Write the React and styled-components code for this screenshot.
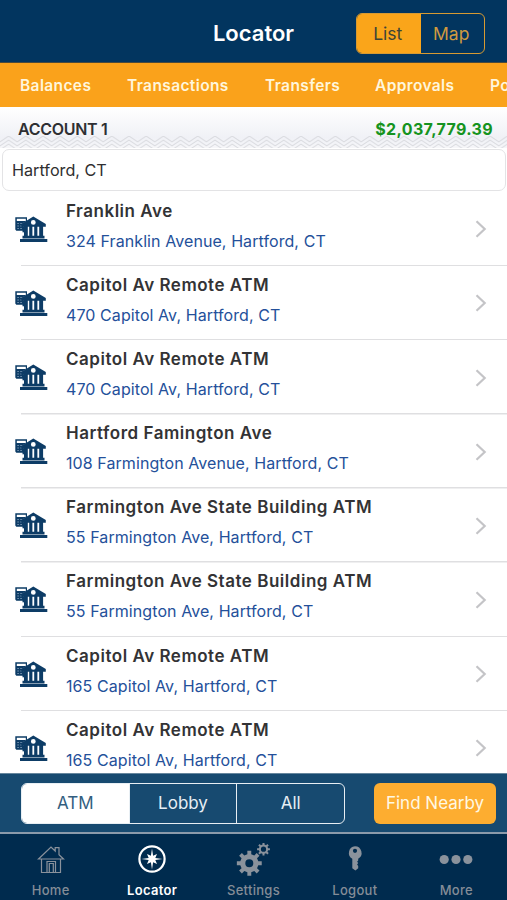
import React from 'react'
import styled, { createGlobalStyle } from 'styled-components'

const branches = [
  { name: 'Franklin Ave', address: '324 Franklin Avenue, Hartford, CT' },
  { name: 'Capitol Av Remote ATM', address: '470 Capitol Av, Hartford, CT' },
  { name: 'Capitol Av Remote ATM', address: '470 Capitol Av, Hartford, CT' },
  { name: 'Hartford Famington Ave', address: '108 Farmington Avenue, Hartford, CT' },
  { name: 'Farmington Ave State Building ATM', address: '55 Farmington Ave, Hartford, CT' },
  { name: 'Farmington Ave State Building ATM', address: '55 Farmington Ave, Hartford, CT' },
  { name: 'Capitol Av Remote ATM', address: '165 Capitol Av, Hartford, CT' },
  { name: 'Capitol Av Remote ATM', address: '165 Capitol Av, Hartford, CT' }
]

// outline of a gear: teeth between the root and the tip radius
const gearPath = (cx, cy, root, tip, teeth) => {
  const step = (Math.PI * 2) / teeth
  const points = []
  for (let i = 0; i < teeth; i++) {
    const a = i * step - Math.PI / 2
    const corners = [[-0.27, root], [-0.2, tip], [0.2, tip], [0.27, root]]
    corners.forEach(([k, r]) => {
      points.push(`${(cx + r * Math.cos(a + k * step)).toFixed(2)} ${(cy + r * Math.sin(a + k * step)).toFixed(2)}`)
    })
  }
  return `M${points.join('L')}Z`
}

const ring = (cx, cy, r) => `M${cx - r} ${cy}a${r} ${r} 0 1 0 ${r * 2} 0a${r} ${r} 0 1 0 ${-r * 2} 0Z`

const BankIcon = () => (
  <svg width='33' height='27' viewBox='0 0 33 27' fill='#0d3c66'>
    <path fillRule='evenodd' d='M.3 1.3H12v3.400L7.500 7.500V10l2.300.5v4.200H1.300L.3 13.500Z M1.800 2.800v2.200h9V2.800Z' />
    <path d='M2.200 7.500h1.800M5.200 7.500h1.800M2.200 10h1.800M5.200 10h1.800M2.200 12.500h1.800M5.200 12.500h1.800' stroke='#7f9cb8' strokeWidth='.8' />
    <path d='M7.500 12.500h2v3.800h-2Z' />
    <path fillRule='evenodd' d={`M18.300 .6 30.800 8v2.700H6.300V8Z ${ring(18.3, 6.4, 2.4)}`} />
    <path d='M9 10h3.800v11H9ZM14.200 10h3.200v11h-3.200ZM19.200 10h3.200v11h-3.200ZM24.200 10h3.900v11h-3.900Z' />
    <path d='M7.500 19.800h22v2.700h-22ZM5 23.100h27.300v2.900H5Z' />
  </svg>
)

const HomeIcon = () => (
  <svg width='30' height='32' viewBox='0 0 30 32' fill='none' stroke='#8a929c' strokeWidth='1.2'>
    <path d='M2.500 16 15 4l4.200 4V4.700h3.800v7L27.500 16Z' />
    <path d='M5.500 16v13.500h19V16M11 29.500v-11h8.500v11M13.300 29.500v-9h4v9' />
  </svg>
)

const CompassIcon = () => (
  <svg width='30' height='32' viewBox='0 0 30 32' fill='#fff'>
    <circle cx='15' cy='16' r='12.6' fill='none' stroke='#fff' strokeWidth='2.2' />
    <path d='M15 5.500l1.100 7.200 3.900-1.700-1.700 3.900L25.500 16l-7.200 1.100 1.700 3.900-3.900-1.700L15 26.500l-1.100-7.200-3.900 1.700 1.700-3.900L4.500 16l7.200-1.100-1.700-3.900 3.900 1.700Z' />
  </svg>
)

const GearsIcon = () => (
  <svg width='36' height='34' viewBox='0 0 36 34' fill='#8a929c' fillRule='evenodd'>
    <path d={gearPath(14.3, 20.2, 9.2, 12.6, 8) + ring(14.3, 20.2, 4)} />
    <path d={gearPath(28.5, 6.2, 4.7, 6.5, 8) + ring(28.5, 6.2, 2.6)} />
  </svg>
)

const KeyIcon = () => (
  <svg width='30' height='32' viewBox='0 0 30 32' fill='#8a929c'>
    <path fillRule='evenodd' d={`M15 3.300a6.700 6.700 0 0 1 3.200 12.500v1.800l-1.100 1.200 1.100 1.300-1.100 1.400 1.100 1.400v2.300L15.400 27.500l-3.100-2.200V15.800A6.700 6.700 0 0 1 15 3.300Z ${ring(15, 7.8, 2.1)}`} />
  </svg>
)

const MoreIcon = () => (
  <svg width='34' height='32' viewBox='0 0 34 32' fill='#8a929c'>
    <circle cx='5.2' cy='16.5' r='4.6' />
    <circle cx='17' cy='16.5' r='4.6' />
    <circle cx='28.8' cy='16.5' r='4.6' />
  </svg>
)

const Chevron = () => (
  <svg width='12' height='18' viewBox='0 0 12 18' fill='none' stroke='#c4c4c7' strokeWidth='2.2'>
    <path d='M1.500 1.200 9.700 9l-8.200 7.800' />
  </svg>
)

const App = () => (
  <Screen>
    <GlobalStyle />
    <TopBar>
      <Title>Locator</Title>
      <ViewSwitch>
        <ViewOption $active>List</ViewOption>
        <ViewOption>Map</ViewOption>
      </ViewSwitch>
    </TopBar>
    <Menu>
      <MenuItem $width={71}>Balances</MenuItem>
      <MenuItem $width={102}>Transactions</MenuItem>
      <MenuItem $width={74}>Transfers</MenuItem>
      <MenuItem $width={79}>Approvals</MenuItem>
      <MenuItem $width={80}>Po</MenuItem>
    </Menu>
    <Account>
      <Waves>
        <defs>
          <pattern id='waves' width='17.2' height='14' patternUnits='userSpaceOnUse'>
            <path d='M-1 6.500 8.600 0l9.600 6.500M-1 10.500 8.600 4l9.600 6.500M-1 14.500 8.600 8l9.600 6.500' fill='none' stroke='#dadbe0' strokeWidth='1' />
          </pattern>
        </defs>
        <rect width='100%' height='12' fill='url(#waves)' />
      </Waves>
      <AccountName>ACCOUNT 1</AccountName>
      <Balance>$2,037,779.39</Balance>
    </Account>
    <Search>Hartford, CT</Search>
    <List>
      {branches.map((branch, i) => (
        <Row key={i}>
          <BankIcon />
          <Info>
            <Name>{branch.name}</Name>
            <Address>{branch.address}</Address>
          </Info>
          <Chevron />
        </Row>
      ))}
    </List>
    <Filters>
      <Segments>
        <Segment $active>ATM</Segment>
        <Segment>Lobby</Segment>
        <Segment>All</Segment>
      </Segments>
      <FindButton>Find Nearby</FindButton>
    </Filters>
    <TabBar>
      <Tab><IconBox><HomeIcon /></IconBox>Home</Tab>
      <Tab $active><IconBox><CompassIcon /></IconBox>Locator</Tab>
      <Tab><IconBox><GearsIcon /></IconBox>Settings</Tab>
      <Tab><IconBox><KeyIcon /></IconBox>Logout</Tab>
      <Tab><IconBox><MoreIcon /></IconBox>More</Tab>
    </TabBar>
  </Screen>
)

const GlobalStyle = createGlobalStyle`
  * {
    box-sizing: border-box;
  }
  body {
    margin: 0;
    background: #fff;
    font-family: Inter, "Liberation Sans", sans-serif;
  }
  button {
    font-family: inherit;
    padding: 0;
    margin: 0;
    border: 0;
  }
`

const Screen = styled.div`
  width: 507px;
  height: 900px;
  display: flex;
  flex-direction: column;
  overflow: hidden;
  background: #fff;
`

const TopBar = styled.header`
  height: 63px;
  flex: none;
  display: grid;
  grid-template-columns: 1fr auto 1fr;
  align-items: center;
  padding: 4px 22px 0;
  background: #02355f;
  border-bottom: 1px solid #4b4a3d;
`

const Title = styled.h1`
  grid-column: 2;
  margin: 0;
  color: #fff;
  font-size: 22px;
  font-weight: 600;
`

const ViewSwitch = styled.div`
  justify-self: end;
  display: flex;
  width: 129px;
  height: 41px;
  border: 1.5px solid #d79a32;
  border-radius: 6px;
  overflow: hidden;
`

const ViewOption = styled.button`
  flex: 1;
  background: ${p => (p.$active ? '#faa51a' : 'transparent')};
  color: ${p => (p.$active ? '#3c4438' : '#d09a40')};
  font-size: 17.5px;
  padding-right: 2px;
`

const Menu = styled.nav`
  height: 44px;
  flex: none;
  display: flex;
  align-items: center;
  gap: 36px;
  padding-left: 20px;
  background: #faa21b;
  overflow: hidden;
`

const MenuItem = styled.span`
  flex: none;
  width: ${p => p.$width}px;
  color: #fff6dc;
  font-size: 15.5px;
  font-weight: 600;
  letter-spacing: 0.38px;
  white-space: nowrap;
`

const Account = styled.section`
  position: relative;
  height: 41px;
  flex: none;
  display: flex;
  justify-content: space-between;
  align-items: center;
  padding: 2px 14px 0 18px;
  background: linear-gradient(#fff, #f0f1f6 75%, #f6f6f9);
`

const Waves = styled.svg`
  position: absolute;
  left: 0;
  bottom: 0;
  width: 100%;
  height: 12px;
`

const AccountName = styled.span`
  position: relative;
  color: #2e2f33;
  font-size: 16px;
  font-weight: 600;
  letter-spacing: -0.3px;
`

const Balance = styled.span`
  position: relative;
  color: #159320;
  font-size: 16px;
  font-weight: 700;
  letter-spacing: 0.35px;
`

const Search = styled.div`
  height: 42px;
  flex: none;
  display: flex;
  align-items: center;
  margin: 1px 1px 0 2px;
  padding: 0 0 1px 9px;
  border: 1.5px solid #e3e3e5;
  border-radius: 7px;
  color: #2f2f31;
  font-size: 16.2px;
`

const List = styled.main`
  flex: 1;
  min-height: 0;
  overflow: hidden;
  padding-top: 1.2px;
`

const Row = styled.article`
  height: 74.15px;
  display: flex;
  align-items: center;
  padding: 0 20px 0 15px;
  background: linear-gradient(#dfdfe1, #dfdfe1) 21px 100% / 100% 1.5px no-repeat;
`

const Info = styled.div`
  flex: 1;
  padding: 0 0 7px 18px;
`

const Name = styled.div`
  color: #333335;
  font-size: 17px;
  font-weight: 600;
  line-height: 22px;
  letter-spacing: 0.52px;
`

const Address = styled.div`
  margin-top: 9px;
  color: #24509a;
  font-size: 16px;
  line-height: 21px;
  letter-spacing: 0.08px;
`

const Filters = styled.section`
  height: 59px;
  flex: none;
  display: flex;
  justify-content: space-between;
  align-items: center;
  padding: 0 11px 0 21px;
  background: #174a70;
  border-top: 1px solid #66869d;
`

const Segments = styled.div`
  display: flex;
  width: 324px;
  height: 41px;
  border: 1.5px solid #e8eff4;
  border-radius: 6px;
  overflow: hidden;
`

const Segment = styled.button`
  flex: 1;
  background: ${p => (p.$active ? '#fff' : 'transparent')};
  color: ${p => (p.$active ? '#335e80' : '#e6eef4')};
  font-size: 17px;

  & + & {
    border-left: 1.5px solid #e8eff4;
  }
`

const FindButton = styled.button`
  width: 122px;
  height: 41px;
  border-radius: 6px;
  background: #fdad30;
  color: #fff8e4;
  font-size: 17px;
`

const TabBar = styled.footer`
  height: 68px;
  flex: none;
  display: grid;
  grid-template-columns: repeat(5, 1fr);
  background: #002b4e;
  border-top: 2px solid #8b9aaa;
`

const Tab = styled.div`
  display: flex;
  flex-direction: column;
  align-items: center;
  padding-top: 9px;
  color: ${p => (p.$active ? '#fff' : '#858d97')};
  font-size: 13px;
  font-weight: ${p => (p.$active ? 600 : 500)};
  line-height: 16px;
  letter-spacing: 0.3px;
`

const IconBox = styled.div`
  height: 39px;
  display: flex;
  align-items: flex-start;
`

export default App
